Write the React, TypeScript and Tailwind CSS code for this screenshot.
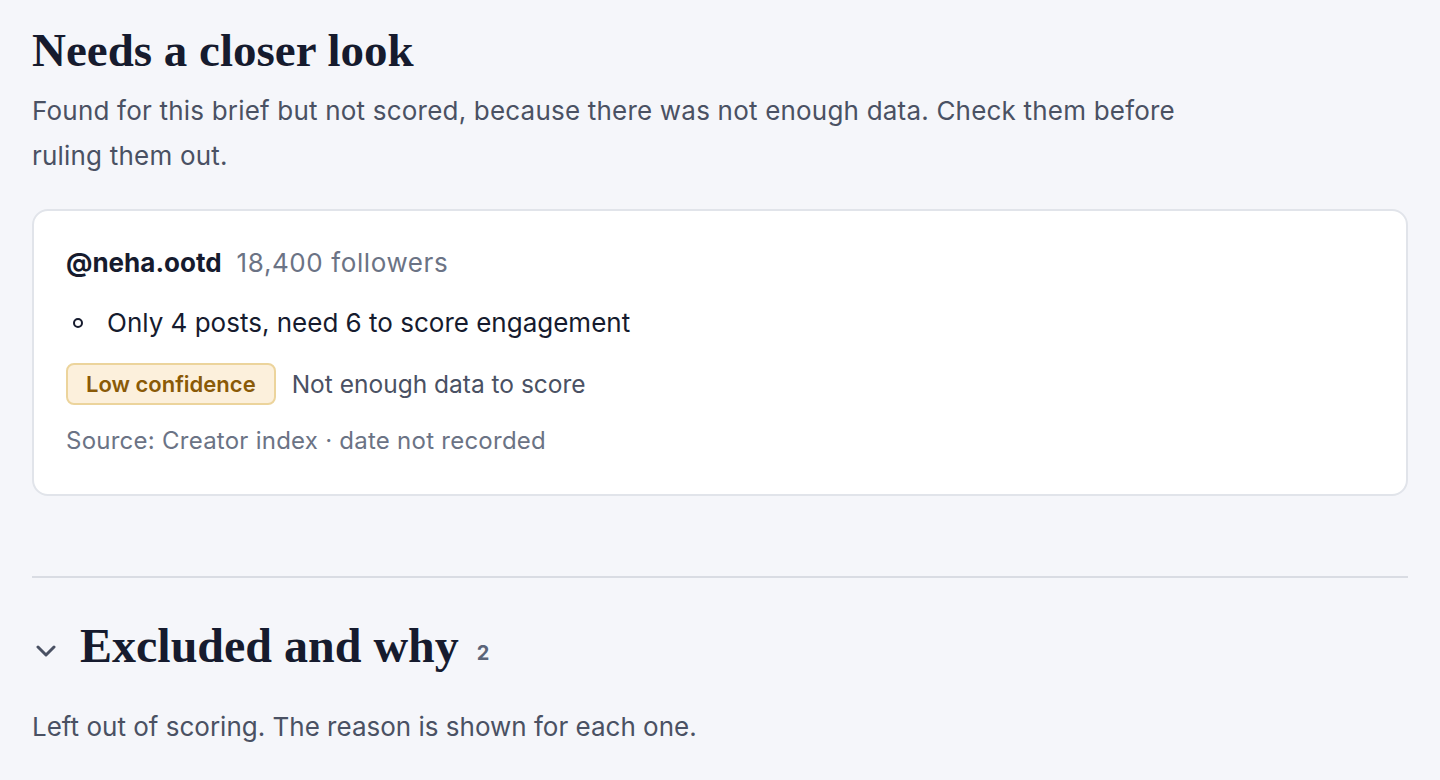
import React from "react";

export default function App() {
  const sans = { fontFamily: "Inter, 'Noto Sans', sans-serif" } as React.CSSProperties;
  return (
    <div className="min-h-[780px] w-full bg-[#f5f6fa] px-8 pt-[22px]" style={sans}>
      <h2 className="text-[47px] leading-[56px] font-bold text-[#161b2e] [font-family:'Liberation_Serif',serif]">
        Needs a closer look
      </h2>
      <p className="mt-[10px] max-w-[1190px] text-[26px] leading-[45px] tracking-[0.2px] text-[#4a5163]">
        Found for this brief but not scored, because there was not enough data. Check them before ruling them out.
      </p>

      <div className="mt-[31px] rounded-2xl border-2 border-[#e1e4ea] bg-white px-8 pt-[34px] pb-[37px]">
        <div className="flex items-baseline gap-[15px] text-[26px] leading-[36px]">
          <span className="font-bold text-[#161b2e]">@neha.ootd</span>
          <span className="tracking-[0.6px] text-[#6b7385]">18,400 followers</span>
        </div>
        <div className="mt-[24px] flex items-center text-[26px] leading-[36px] text-[#161b2e]">
          <span className="ml-[7px] mr-[24px] inline-block h-[10px] w-[10px] rounded-full border-2 border-[#161b2e]" />
          <span>Only 4 posts, need 6 to score engagement</span>
        </div>
        <div className="mt-[22px] flex items-center gap-4">
          <span className="flex h-[42px] items-center rounded-lg border-2 border-[#ecd49c] bg-[#fcf0dc] px-[18px] text-[22px] font-semibold text-[#8a5a07]">
            Low confidence
          </span>
          <span className="text-[24.5px] text-[#4a5163]">Not enough data to score</span>
        </div>
        <div className="mt-[19px] text-[24px] leading-[33px] tracking-[0.25px] text-[#6b7385]">
          Source: Creator index · date not recorded
        </div>
      </div>

      <div className="mt-[80px] h-[2px] w-full bg-[#d9dce3]" />

      <div className="mt-[39px] flex items-center">
        <svg width="20" height="12" viewBox="0 0 20 12" className="ml-[4px] mr-[24px] mt-[10px]" fill="none">
          <path d="M2 2 L10 10 L18 2" stroke="#4a5163" strokeWidth="3" strokeLinecap="round" strokeLinejoin="round" />
        </svg>
        <h2 className="text-[48px] leading-[57px] font-bold text-[#161b2e] [font-family:'Liberation_Serif',serif]">
          Excluded and why
        </h2>
        <span className="ml-[18px] mt-[14px] text-[20px] font-bold text-[#5b6478]">2</span>
      </div>

      <p className="mt-[30px] text-[26px] leading-[45px] text-[#4a5163]">
        Left out of scoring. The reason is shown for each one.
      </p>
    </div>
  );
}
